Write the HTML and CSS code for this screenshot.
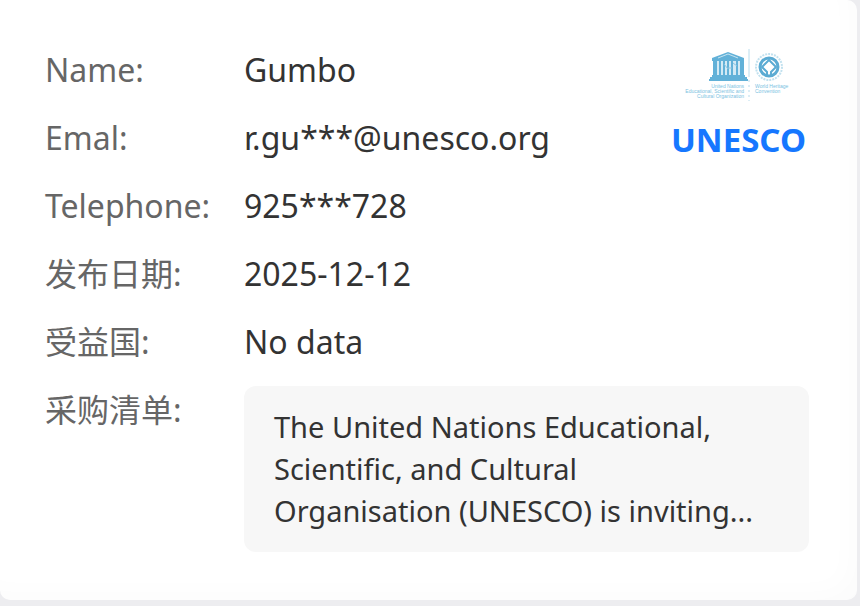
FILE: index.html
```
<!DOCTYPE html>
<html lang="zh-CN">
	<head>
		<meta charset="utf-8">
		<title>UNESCO</title>
		<link rel="stylesheet" href="styles.css">
	</head>

	<body>
		<div class="card">
			<div class="card_top">
				<dl class="info">
					<div class="row"><dt>Name:</dt><dd>Gumbo</dd></div>
					<div class="row"><dt>Emal:</dt><dd>r.gu***@unesco.org</dd></div>
					<div class="row"><dt>Telephone:</dt><dd>925***728</dd></div>
					<div class="row"><dt>发布日期:</dt><dd>2025-12-12</dd></div>
					<div class="row"><dt>受益国:</dt><dd>No data</dd></div>
				</dl>
				<div class="org">
					<svg class="org_logo" viewBox="-6 0 108 56" width="108" height="56">
						<!-- temple -->
						<g fill="#62b1d8">
							<path d="M22 12 L38 6 L54 12 V15 H22 Z"/>
							<path d="M23 15h4v15h-4z M50 15h4v15h-4z"/>
							<path d="M22 29h33v2h2v2h1v2H19v-2h1v-2h2z"/>
						</g>
						<path d="M27 15h23v14H27z" fill="#d3eaf5"/>
						<path d="M30 15v14 M34 15v14 M38 15v14 M42 15v14 M47 15v14" stroke="#62b1d8" stroke-width="2"/>
						<path d="M34 18l4 5 M38 22h4 M43 17l4 3" stroke="#8bc5e1" fill="none"/>
						<path d="M28 12 L38 8 L48 12" fill="none" stroke="#c6e4f1"/>
						<!-- divider -->
						<path d="M59 3v28" stroke="#b9dcec"/>
						<path d="M59 34v21" stroke="#b9dcec" stroke-dasharray="2 3"/>
						<!-- emblem -->
						<circle cx="79" cy="21" r="13" fill="none" stroke="#c2e1ef" stroke-width="2" stroke-dasharray="2 1"/>
						<circle cx="79" cy="21" r="9" fill="none" stroke="#5babd3" stroke-width="3"/>
						<path d="M77 30v-4l-5-5 7-7 7 7-5 5v4" fill="none" stroke="#5babd3" stroke-width="2"/>
						<!-- lettering -->
						<g class="org_logo_text">
							<text x="54" y="42" text-anchor="end">United Nations</text>
							<text x="54" y="47" text-anchor="end">Educational, Scientific and</text>
							<text x="54" y="52" text-anchor="end">Cultural Organization</text>
							<text x="65" y="42">World Heritage</text>
							<text x="65" y="47">Convention</text>
						</g>
					</svg>
					<a class="org_name" href="#">UNESCO</a>
				</div>
			</div>
			<dl class="info">
				<div class="row">
					<dt>采购清单:</dt>
					<dd class="detail"><p>The United Nations Educational, Scientific, and Cultural Organisation (UNESCO) is inviting...</p></dd>
				</div>
			</dl>
		</div>
	</body>
</html>
```

FILE: styles.css
```
* {
	box-sizing: border-box;
}
body {
	margin: 0;
	padding: 0 3px 7px 0;
	background: #ededf0;
	font-family: "Noto Sans", "Noto Sans CJK SC", sans-serif;
	font-size: 32px;
	line-height: 48px;
	color: #333;
}
.card {
	padding: 46px 48px 48px 45px;
	background: #fff;
	border-radius: 0 10px 10px 10px;
	box-shadow: inset -16px -16px 32px -12px rgba(0,0,0,0.02);
}
.card_top {
	display: flex;
	justify-content: space-between;
	margin-bottom: 20px;
}
.info {
	display: flex;
	flex-direction: column;
	gap: 20px;
	margin: 0;
}
.row {
	display: flex;
}
.row dt {
	flex: 0 0 199px;
	color: #666;
}
.row dd {
	margin: 0;
}
.row .detail {
	flex: 1;
	padding: 20px 30px;
	background: #f7f7f7;
	border-radius: 12px;
	font-size: 29px;
	line-height: 42px;
}
.detail p {
	margin: 0;
	max-width: 480px;
}

.org {
	display: flex;
	flex-direction: column;
	align-items: center;
	padding-right: 3px;
	gap: 14px;
}
.org_logo {
	display: block;
}
.org_logo_text {
	fill: #7cbfdf;
	font-family: "Liberation Sans", sans-serif;
	font-size: 5px;
}
.org_name {
	color: #1677ff;
	font-size: 33px;
	font-weight: bold;
	text-decoration: none;
}
```
